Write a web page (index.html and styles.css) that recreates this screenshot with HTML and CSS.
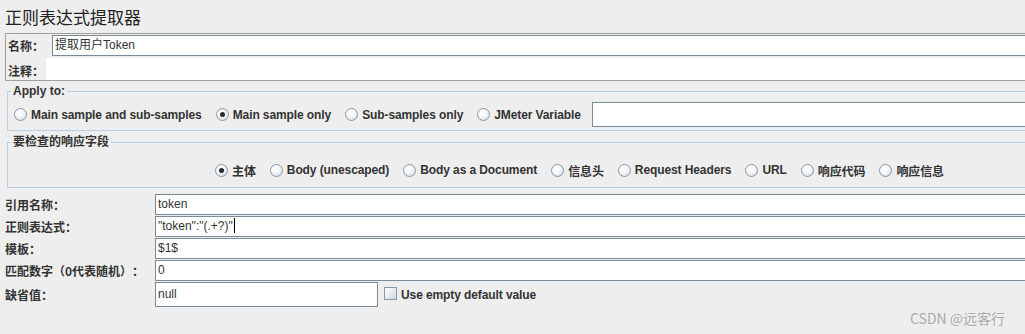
FILE: index.html
```html
<!DOCTYPE html>
<html lang="zh">
<head>
<meta charset="utf-8">
<title>正则表达式提取器</title>
<link rel="stylesheet" href="styles.css">
</head>
<body>
<div class="page">
  <h1 class="title">正则表达式提取器</h1>

  <div class="namebox">
    <div class="nrow">
      <span class="nlabel name-label">名称：</span>
      <div class="field name-field">提取用户Token</div>
    </div>
    <div class="nrow">
      <span class="nlabel comment-label">注释：</span>
      <div class="comment-field"></div>
    </div>
  </div>

  <fieldset class="group apply">
    <legend>Apply to:</legend>
    <div class="radios">
      <label class="opt"><span class="radio"></span>Main sample and sub-samples</label>
      <label class="opt"><span class="radio on"></span>Main sample only</label>
      <label class="opt"><span class="radio"></span>Sub-samples only</label>
      <label class="opt"><span class="radio"></span>JMeter Variable</label>
      <div class="field var-field"></div>
    </div>
  </fieldset>

  <fieldset class="group fields">
    <legend>要检查的响应字段</legend>
    <div class="radios centered">
      <label class="opt"><span class="radio on"></span>主体</label>
      <label class="opt"><span class="radio"></span>Body (unescaped)</label>
      <label class="opt"><span class="radio"></span>Body as a Document</label>
      <label class="opt"><span class="radio"></span>信息头</label>
      <label class="opt"><span class="radio"></span>Request Headers</label>
      <label class="opt"><span class="radio"></span>URL</label>
      <label class="opt"><span class="radio"></span>响应代码</label>
      <label class="opt"><span class="radio"></span>响应信息</label>
    </div>
  </fieldset>

  <div class="form">
    <span class="flabel">引用名称：</span>
    <div class="field">token</div>
    <span class="flabel">正则表达式：</span>
    <div class="field">"token":"(.+?)"<span class="caret"></span></div>
    <span class="flabel">模板：</span>
    <div class="field">$1$</div>
    <span class="flabel">匹配数字（0代表随机）：</span>
    <div class="field">0</div>
    <span class="flabel">缺省值：</span>
    <div class="last-row">
      <div class="field default-field">null</div>
      <label class="opt check-opt"><span class="checkbox"></span>Use empty default value</label>
    </div>
  </div>

  <div class="watermark">CSDN @远客行</div>
</div>
</body>
</html>
```

FILE: styles.css
```css
html, body {
  margin: 0;
  padding: 0;
  background: #eeeeee;
  overflow: hidden;
}

body {
  width: 1025px;
  height: 334px;
  font-family: "Liberation Sans", "Noto Sans CJK SC", sans-serif;
  color: #333333;
  text-spacing-trim: space-all;
}

.page {
  position: relative;
  width: 1045px;
  height: 334px;
}

.title {
  margin: 0;
  padding: 5px 0 0 5px;
  height: 28px;
  font-size: 17px;
  line-height: 24px;
  font-weight: normal;
  font-family: "Noto Sans CJK SC", sans-serif;
  color: #222222;
}

.namebox {
  margin-left: 5px;
  border: 1px solid #a0a0a0;
  padding: 1px 0 0 2px;
  height: 45px;
  display: flex;
  flex-direction: column;
  gap: 2px;
}

.nrow {
  display: flex;
  align-items: center;
}

.nlabel {
  font-size: 12px;
  font-weight: bold;
  font-family: "Noto Sans CJK SC", sans-serif;
}

.name-label { width: 44px; }
.comment-label { width: 38px; padding-top: 2px; }

.field {
  box-sizing: border-box;
  height: 21px;
  border: 1px solid #7a8a99;
  background: #ffffff;
  font-size: 12px;
  line-height: 19px;
  padding-left: 2px;
  color: #333333;
  font-family: "Liberation Sans", "Noto Sans CJK SC", sans-serif;
  white-space: nowrap;
}

.name-field {
  flex: 1;
}

.comment-field {
  flex: 1;
  height: 22px;
  background: #ffffff;
}

.group {
  margin: 3px 0 0 7px;
  border: 1px solid #b8cfe5;
  padding: 4px 0 3px 3px;
  min-width: 0;
}

.group legend {
  padding: 0 2px;
  font-size: 12px;
  line-height: 14px;
  font-weight: bold;
  font-family: "Liberation Sans", "Noto Sans CJK SC", sans-serif;
}

.fields {
  margin-top: 4px;
  padding: 10px 0 6px 3px;
}

.radios {
  display: flex;
  align-items: center;
  gap: 14px;
  height: 25px;
  padding-left: 3px;
}

.radios.centered {
  height: 22px;
  padding-left: 204px;
}

.opt {
  display: flex;
  align-items: center;
  gap: 4px;
  font-size: 12px;
  font-weight: bold;
  letter-spacing: -0.1px;
  white-space: nowrap;
  color: #333333;
}

.radio {
  position: relative;
  box-sizing: border-box;
  width: 13px;
  height: 13px;
  border-radius: 50%;
  border: 1px solid #8a99a8;
  background: radial-gradient(circle at 40% 35%, #ffffff 0%, #f2f5f8 45%, #c9d3de 100%);
  flex: none;
}

.radio.on::after {
  content: "";
  position: absolute;
  left: 3px;
  top: 3px;
  width: 5px;
  height: 5px;
  border-radius: 50%;
  background: #2a2a2a;
}

.var-field {
  flex: 1;
  height: 25px;
  margin-left: -3px;
}

.form {
  margin: 6px 0 0 5px;
  display: grid;
  grid-template-columns: 150px 1fr;
  row-gap: 1px;
  align-items: center;
}

.flabel {
  font-size: 12px;
  font-weight: bold;
  font-family: "Noto Sans CJK SC", sans-serif;
  white-space: nowrap;
}

.caret {
  display: inline-block;
  width: 1px;
  height: 15px;
  background: #000000;
  vertical-align: -3px;
  margin-left: 1px;
}

.last-row {
  display: flex;
  align-items: center;
}

.default-field {
  width: 223px;
  height: 25px;
  line-height: 23px;
}

.check-opt {
  margin-left: 6px;
}

.checkbox {
  box-sizing: border-box;
  width: 13px;
  height: 13px;
  border: 1px solid #8a99a8;
  background: linear-gradient(135deg, #ffffff 0%, #e6ecf2 50%, #c9d3de 100%);
  flex: none;
  margin-top: -2px;
}

.watermark {
  position: absolute;
  left: 910px;
  top: 308px;
  font-size: 14px;
  line-height: 20px;
  color: #ababab;
  font-family: "Noto Sans CJK SC", sans-serif;
  white-space: nowrap;
}
```
